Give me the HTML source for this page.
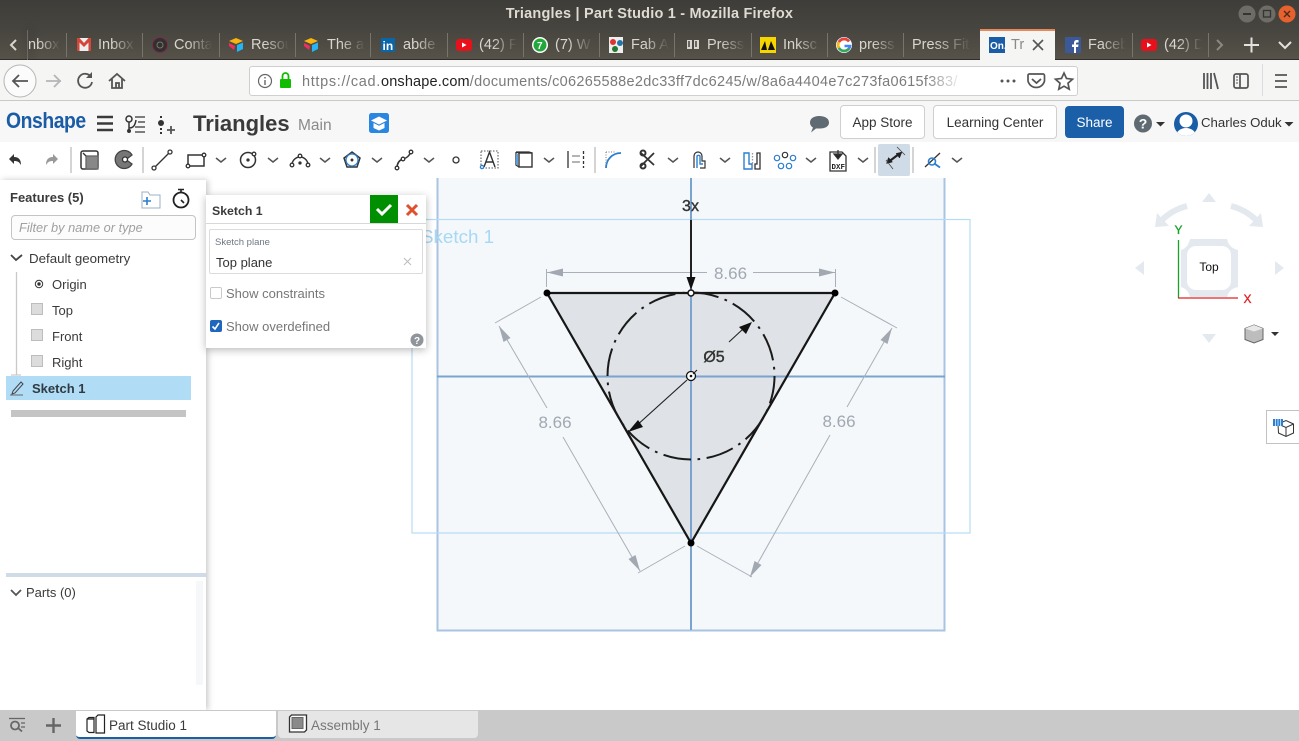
<!DOCTYPE html>
<html><head><meta charset="utf-8"><title>Triangles | Part Studio 1</title>
<style>
html,body{margin:0;padding:0;width:1299px;height:741px;overflow:hidden;background:#fff;font-family:"Liberation Sans",sans-serif}
.a{position:absolute}
#stage{position:absolute;left:0;top:0;width:1299px;height:741px;overflow:hidden}
.t{position:absolute;white-space:nowrap;line-height:16px}
.tab{position:absolute;top:30px;height:30px;width:76px;overflow:hidden}
.tab span{position:absolute;left:32px;top:7px;font-size:14.5px;line-height:16px;color:#d9d6cf;white-space:nowrap;width:38px;overflow:hidden;-webkit-mask-image:linear-gradient(90deg,#000 35%,transparent 100%);mask-image:linear-gradient(90deg,#000 35%,transparent 100%)}
.sep{position:absolute;top:33px;width:1px;height:24px;background:#77746c}
.btn{position:absolute;box-sizing:border-box;background:#fff;border:1px solid #cfcfcf;border-radius:4px;text-align:center;font-size:13.5px;color:#333;line-height:34px}
svg{position:absolute;overflow:visible}
</style></head><body><div id="stage">

<!-- window chrome -->
<div class="a" style="left:0;top:0;width:1299px;height:30px;background:linear-gradient(#3e3d39,#47453f)"></div>
<div class="a" style="left:0;top:30px;width:1299px;height:30px;background:linear-gradient(#47453f,#565249);border-bottom:1px solid #2f2e2b;box-sizing:border-box"></div>
<div class="t" style="left:0;width:1299px;text-align:center;top:6px;font-size:14.5px;letter-spacing:.2px;font-weight:bold;color:#dfdbd2">Triangles | Part Studio 1 - Mozilla Firefox</div>
<svg style="left:0;top:0" width="1299" height="60">
<circle cx="1247" cy="14" r="8.5" fill="#6e6c66"/><rect x="1243" y="13" width="8" height="2" fill="#35342f"/>
<circle cx="1267" cy="14" r="8.5" fill="#6e6c66"/><rect x="1263.5" y="10.5" width="7" height="6.5" fill="none" stroke="#35342f" stroke-width="1.3"/>
<circle cx="1287" cy="14" r="8.5" fill="#e5622f"/><path d="M1284 11l6 6M1290 11l-6 6" stroke="#4a2a18" stroke-width="1.4"/>
<path d="M16 40l-5 5 5 5" fill="none" stroke="#d9d6cf" stroke-width="2"/>
</svg>
<div class="a" style="left:27px;top:30px;width:1px;height:30px;background:#6c6a63;box-shadow:3px 0 8px #222"></div>
<div class="tab" style="left:28px;width:38px"><span style="left:0;width:32px">nbox</span></div>
<div class="sep" style="left:66px"></div><div class="tab" style="left:66px"><span>Inbox</span></div>
<div class="sep" style="left:142px"></div><div class="tab" style="left:142px"><span>Conta</span></div>
<div class="sep" style="left:219px"></div><div class="tab" style="left:219px"><span>Resou</span></div>
<div class="sep" style="left:295px"></div><div class="tab" style="left:295px"><span>The a</span></div>
<div class="sep" style="left:370px"></div><div class="tab" style="left:371px"><span>abde</span></div>
<div class="sep" style="left:447px"></div><div class="tab" style="left:447px"><span>(42) F</span></div>
<div class="sep" style="left:523px"></div><div class="tab" style="left:523px"><span>(7) W</span></div>
<div class="sep" style="left:599px"></div><div class="tab" style="left:599px"><span>Fab A</span></div>
<div class="sep" style="left:674px"></div><div class="tab" style="left:675px"><span>Press</span></div>
<div class="sep" style="left:751px"></div><div class="tab" style="left:751px"><span>Inksc</span></div>
<div class="sep" style="left:827px"></div><div class="tab" style="left:827px"><span>press</span></div>
<div class="sep" style="left:903px"></div><div class="tab" style="left:903px"><span style="left:9px;width:60px">Press Fit</span></div>
<div class="sep" style="left:1132px"></div><div class="tab" style="left:1056px"><span>Faceb</span></div>
<div class="sep" style="left:1208px"></div><div class="tab" style="left:1132px"><span>(42) D</span></div>
<!-- active tab -->
<div class="a" style="left:980px;top:29px;width:75px;height:31px;background:#f5f5f4;border-top:2px solid #e8875a;box-sizing:border-box"></div>
<div class="t" style="left:1011px;top:37px;font-size:14.5px;color:#8a8a88;width:13px;overflow:hidden">Tri</div>
<svg style="left:0;top:0" width="1299" height="60">
<path d="M1033 40l10 10M1043 40l-10 10" stroke="#555" stroke-width="1.6"/>
<rect x="989" y="37" width="16" height="16" fill="#1a5ca6"/><text x="990" y="49" font-family="Liberation Sans" font-weight="bold" font-size="10" fill="#fff">On.</text>
<rect x="77" y="38" width="14" height="13" fill="#eee"/><path d="M77 38h2.500l4.500 5 4.500-5H91v13h-2.500v-8.500L84 47l-4.500-4.500V51H77z" fill="#d44638"/>
<circle cx="160" cy="45" r="7.500" fill="#33302c" stroke="#7a2a55"/><circle cx="160" cy="45" r="3" fill="none" stroke="#777"/>
<path d="M229 41l7-3 7 3-7 3z" fill="#f8b50e"/><path d="M237 45l6-2.500V49l-6 3z" fill="#24b5f2"/><path d="M229 43l6 3-1 4-5-4z" fill="#ef2f60"/>
<path d="M304 41l7-3 7 3-7 3z" fill="#f8b50e"/><path d="M312 45l6-2.500V49l-6 3z" fill="#24b5f2"/><path d="M304 43l6 3-1 4-5-4z" fill="#ef2f60"/>
<rect x="381" y="38" width="14" height="14" fill="#0b66a8"/><text x="382.500" y="50" font-family="Liberation Sans" font-weight="bold" font-size="12" fill="#fff">in</text>
<rect x="456" y="39" width="16" height="12" rx="3" fill="#e8101a"/><path d="M462 42.500l4.500 2.500-4.500 2.500z" fill="#fff"/>
<rect x="1141" y="39" width="16" height="12" rx="3" fill="#e8101a"/><path d="M1147 42.500l4.500 2.500-4.500 2.500z" fill="#fff"/>
<circle cx="540" cy="45" r="8" fill="#fff"/><circle cx="540" cy="45" r="6.500" fill="#22a83a"/><text x="537" y="49" font-size="10" font-weight="bold" font-family="Liberation Sans" fill="#fff">7</text>
<rect x="609" y="37" width="14" height="16" fill="#eee"/><circle cx="613" cy="42" r="3" fill="#d33"/><circle cx="620" cy="43" r="3" fill="#27a"/><circle cx="615" cy="49" r="3" fill="#273"/>
<path d="M687 40h5v9h-5zM694 40h5v9h-5z" fill="#d9d6cf"/><path d="M689 41v6M696 41v6" stroke="#444" stroke-width="1.500"/>
<rect x="760" y="37" width="16" height="16" fill="#f7d600"/><path d="M761 50l4-9 2 9zM768 50l3-9 4 9z" fill="#111"/>
<circle cx="844" cy="45" r="8" fill="#fff"/><path d="M849 41.500A6 6 0 1 0 850 46h-5.500" fill="none" stroke="#4285f4" stroke-width="2.600"/><path d="M849 41.500A6 6 0 0 0 839 42" fill="none" stroke="#ea4335" stroke-width="2.600"/><path d="M839 42a6 6 0 0 0 0 6" fill="none" stroke="#fbbc05" stroke-width="2.600"/><path d="M839 48a6 6 0 0 0 10 0.500" fill="none" stroke="#34a853" stroke-width="2.600"/>
<rect x="1065" y="37" width="16" height="16" fill="#3b5998"/><path d="M1074 53v-6h-2v-2.500h2V43c0-2 1-3 3-3h1.500v2.500H1077c-.7 0-1 .4-1 1v1h2.500l-.4 2.500H1076v6z" fill="#fff"/>
<path d="M1217 40l5 5-5 5" fill="none" stroke="#8b8880" stroke-width="2"/>
<path d="M1244 45h15M1251.500 37.500v15" stroke="#e4e2dc" stroke-width="2"/>
<path d="M1279 42l6 6 6-6" fill="none" stroke="#e4e2dc" stroke-width="2"/>
</svg>

<!-- nav bar -->
<div class="a" style="left:0;top:60px;width:1299px;height:41px;background:#f5f5f4;border-bottom:1px solid #c9c9c9;box-sizing:border-box"></div>
<div class="a" style="left:249px;top:66px;width:829px;height:30px;background:#fff;border:1px solid #cfcfcf;border-radius:3px;box-sizing:border-box"></div>
<div class="t" style="left:302px;top:74px;font-size:14.5px;letter-spacing:.3px;color:#7b7b7b;width:662px;overflow:hidden;-webkit-mask-image:linear-gradient(90deg,#000 94%,transparent);mask-image:linear-gradient(90deg,#000 94%,transparent)"><span style="letter-spacing:.67px">https://cad.</span><span style="color:#222;letter-spacing:.16px">onshape.com</span>/documents/c06265588e2dc33ff7dc6245/w/8a6a4404e7c273fa0615f383/</div>
<svg style="left:0;top:60px" width="1299" height="41">
<circle cx="20" cy="21" r="16" fill="#fbfbfb" stroke="#b5b5b5"/>
<path d="M28 21H13M19 15l-6 6 6 6" fill="none" stroke="#555" stroke-width="1.800"/>
<path d="M61 21H46M54 15l6 6-6 6" fill="none" stroke="#b5b5b5" stroke-width="1.800"/>
<path d="M91 17a7 7 0 1 0 1 5" fill="none" stroke="#555" stroke-width="1.800"/><path d="M92 12v6h-6z" fill="#555"/>
<path d="M109 21l8-7 8 7M112 19v9h10v-9M116 28v-5h3v5" fill="none" stroke="#555" stroke-width="1.800"/>
<circle cx="265" cy="21" r="6.500" fill="none" stroke="#666" stroke-width="1.200"/><path d="M265 20v5M265 17v1.500" stroke="#666" stroke-width="1.400"/>
<rect x="280" y="19" width="11" height="9" rx="1" fill="#12bc00"/><path d="M282.500 19v-3a3 3 0 0 1 6 0v3" fill="none" stroke="#12bc00" stroke-width="1.800"/>
<circle cx="1002" cy="21" r="1.500" fill="#555"/><circle cx="1008" cy="21" r="1.500" fill="#555"/><circle cx="1014" cy="21" r="1.500" fill="#555"/>
<path d="M1029 14h14a1.500 1.500 0 0 1 1.500 1.500V21a8.500 8.500 0 0 1-16.500 0v-5.500a1.500 1.500 0 0 1 1-1.500z" fill="none" stroke="#555" stroke-width="1.700"/><path d="M1032 19l4.500 4 4.500-4" fill="none" stroke="#555" stroke-width="1.800"/>
<path d="M1064 13l2.500 5.500 6 .7-4.500 4 1.200 6-5.200-3-5.200 3 1.200-6-4.500-4 6-.7z" fill="none" stroke="#555" stroke-width="1.700"/>
<path d="M1204 13v16M1207.500 13v16M1211 13v16M1214 13l4 16" stroke="#555" stroke-width="1.800" fill="none"/>
<rect x="1234" y="14" width="14" height="14" rx="2" fill="none" stroke="#555" stroke-width="1.700"/><path d="M1240 14v14" stroke="#555" stroke-width="1.700"/><path d="M1236 17h2M1236 20h2M1236 23h2" stroke="#555"/>
<path d="M1262.500 4v32" stroke="#dcdcdc"/>
<path d="M1275 15h12M1275 21h12M1275 27h12" stroke="#555" stroke-width="1.800"/>
</svg>

<!-- onshape header -->
<div class="a" style="left:0;top:101px;width:1299px;height:41px;background:#f7f7f7"></div>
<div class="t" style="left:6px;top:110px;font-size:22px;line-height:22px;font-weight:bold;color:#1a5ca6;letter-spacing:-.5px;transform:scaleX(.88);transform-origin:0 0">Onshape</div>
<div class="t" style="left:193px;top:112px;font-size:22px;line-height:24px;font-weight:bold;color:#3a3a3a">Triangles</div>
<div class="t" style="left:298px;top:118px;font-size:15.5px;color:#8a8a8a">Main</div>
<svg style="left:0;top:101px" width="1299" height="41">
<path d="M97 16h16M97 22.500h16M97 29h16" stroke="#3a3a3a" stroke-width="2.600"/>
<circle cx="129" cy="18" r="3" fill="none" stroke="#333" stroke-width="1.500"/><path d="M129 21v8M129 27c4 0 6-2 7-8" fill="none" stroke="#333" stroke-width="1.500"/><circle cx="129" cy="30" r="2" fill="#333"/>
<path d="M135 16h10M138 21h7M135 26h10M135 31h10" stroke="#555" stroke-width="1.500"/>
<circle cx="161" cy="22" r="3" fill="#333"/><path d="M161 15v2M161 27v2M161 31v2" stroke="#333" stroke-width="2"/><path d="M167 29h8M171 25v8" stroke="#555" stroke-width="1.800"/>
<rect x="369" y="12" width="20" height="20" rx="2.500" fill="#2a86e0"/><path d="M379 15.500l8 4-8 4-8-4z" fill="#fff"/><path d="M373.500 22v5l5.500 2.500 5.500-2.500v-5l-5.500 2.800z" fill="#fff"/>
<path d="M819 15c6 0 10 2.500 10 6.500s-4 6-9 6c-2 0-3 0-4 0l-5 4 2-5c-2-1-3-3-3-5 0-4 4-6.500 9-6.500z" fill="#5f6a72"/>
<circle cx="1143" cy="22.500" r="9" fill="#5f6a72"/><text x="1143" y="27.500" text-anchor="middle" font-family="Liberation Sans" font-size="14" font-weight="bold" fill="#fff">?</text>
<path d="M1156 21h9l-4.500 4.500z" fill="#333"/>
<clipPath id="av"><circle cx="1186" cy="23" r="12"/></clipPath><circle cx="1186" cy="23" r="12" fill="#1a5ca6"/><g clip-path="url(#av)"><circle cx="1186" cy="20" r="6.500" fill="#fff"/><ellipse cx="1186" cy="35" rx="10" ry="8" fill="#fff"/></g>
<path d="M1284.500 21h9l-4.500 4.500z" fill="#333"/>
</svg>
<div class="btn" style="left:840px;top:105px;width:85px;height:34px">App Store</div>
<div class="btn" style="left:933px;top:105px;width:124px;height:34px">Learning Center</div>
<div class="btn" style="left:1065px;top:106px;width:59px;height:32px;background:#1b5fa8;border:0;color:#fff;line-height:34px">Share</div>
<div class="t" style="left:1201px;top:115px;font-size:13.2px;color:#333">Charles Oduk</div>

<!-- toolbar -->
<div class="a" style="left:0;top:142px;width:1299px;height:36px;background:#fff"></div>
<div class="a" style="left:878px;top:144px;width:32px;height:32px;background:#cfdbe6;border-radius:2px"></div>
<svg style="left:0;top:142px" width="1299" height="36" fill="none" stroke="#333" stroke-width="1.300">
<path d="M13 17l5-5v3c5 0 7 3 7 8-2-3-3-4-7-4v3z" fill="#333" stroke="none" transform="translate(-4 0)"/>
<path d="M13 17l5-5v3c5 0 7 3 7 8-2-3-3-4-7-4v3z" fill="#999" stroke="none" transform="matrix(-1 0 0 1 71 0)"/>
<path d="M71 5v26M143 5v26M595 5v26M875 5v26M913 5v26" stroke="#d4d4d4" stroke-width="2"/>
<rect x="81" y="9" width="17" height="18" rx="2" stroke-width="1.500"/><rect x="86" y="14" width="12" height="13" fill="#888" stroke="#666"/><path d="M83 11l3 3"/>
<path d="M132 13a9 9 0 1 0 0 9l-6-4.500z" fill="#777" stroke="#444"/><circle cx="125" cy="17.500" r="2.500" fill="#fff"/>
<path d="M154 26L170 10"/><circle cx="154" cy="26" r="2" fill="#fff"/><circle cx="170" cy="10" r="2" fill="#fff"/>
<rect x="188" y="13" width="16" height="11" stroke-width="1.500"/><circle cx="188" cy="24" r="1.800" fill="#fff"/><circle cx="204" cy="13" r="1.800" fill="#fff"/>
<circle cx="248" cy="18" r="7.500" stroke-width="1.500"/><circle cx="248" cy="18" r="1" fill="#333"/><circle cx="254" cy="12" r="1.800" fill="#fff"/>
<path d="M292 23a8 8 0 0 1 16 0" stroke-width="1.500"/><circle cx="292" cy="23" r="1.800" fill="#fff"/><circle cx="308" cy="23" r="1.800" fill="#fff"/><circle cx="300" cy="14" r="1.800" fill="#fff"/><circle cx="300" cy="21" r="1" fill="#333"/>
<path d="M352 10l8 6-3 9h-10l-3-9z" stroke-width="1.500"/><circle cx="352" cy="18" r="6" stroke="#2a7fd0"/><circle cx="352" cy="18" r=".8" fill="#2a7fd0"/>
<path d="M397 26c0-6 3-8 6-9 4-1 6-3 8-7" stroke-width="1.500"/><circle cx="397" cy="26" r="1.800" fill="#fff"/><circle cx="403" cy="17" r="1.800" fill="#fff"/><circle cx="411" cy="10" r="1.800" fill="#fff"/>
<circle cx="456" cy="18" r="3"/>
<rect x="481" y="9" width="17" height="17" stroke="#777" stroke-dasharray="1.500 1.500"/><path d="M484 25l5.500-15 5.500 15M486 20h7" stroke-width="1.400"/><circle cx="482" cy="25" r="1.600" stroke="#2a7fd0" fill="#fff"/>
<rect x="519" y="11" width="13" height="14" stroke-width="1.400"/><path d="M516 10l3 1M516 10v13l3 2M516 10h13l3 1"/><path d="M517 12v11" stroke="#5aa0e0" stroke-width="2"/>
<path d="M568 9v17"/><path d="M583.500 9v17" stroke-dasharray="3 2"/><path d="M572 14h8M572 20h8" stroke="#888"/>
<path d="M606 26c0-8 6-15 15-15" stroke="#2a7fd0" stroke-width="1.800"/><path d="M606 10h10M606 10v13" stroke="#999" stroke-dasharray="1 1.500"/>
<path d="M641 11l13 12M641 24l13-13" stroke-width="1.800"/><circle cx="643" cy="11" r="2.500" stroke-width="2"/><circle cx="643" cy="24" r="2.500" stroke-width="2"/>
<path d="M694 26V14a4 4 0 0 1 8 0v5h3v7h-5" stroke-width="1.200"/><path d="M697 26V14a2 2 0 0 1 3 0v8h3" stroke="#2a7fd0" stroke-width="1.400"/>
<path d="M744 11h5v11h3v5h-8z" stroke="#2a7fd0" stroke-width="1.400"/><path d="M755 27h5V11h-3v11h-2z" stroke-width="1.300"/><path d="M752.500 11v16" stroke="#999" stroke-dasharray="1.500 1.500"/>
<g stroke="#2a7fd0" stroke-width="1.200"><circle cx="777" cy="16" r="2.700"/><circle cx="793" cy="16" r="2.700"/><circle cx="781" cy="24" r="2.700"/><circle cx="789" cy="24" r="2.700"/></g><circle cx="785" cy="13" r="2.700" stroke-width="1.200"/>
<path d="M830 10h12l4 4v15h-16z" stroke-width="1.300"/><path d="M838 8v6M834 12h8l-4 5z" fill="#222"/>
<text x="831.500" y="27" font-family="Liberation Mono" font-size="7.500" font-weight="bold" fill="#222" stroke="none">DXF</text>
<path d="M889 19.500l10-7.500" stroke="#222" stroke-width="2.200"/><path d="M886.500 21.500l2-6 4 4.500zM902 10l-6 1.500 3.500 4.500z" fill="#222" stroke="#222" stroke-width=".5"/><path d="M886 18l7 9M897 5l8 8" stroke="#444" stroke-width=".8"/>
<path d="M925 25l15-14" stroke-width="1.300"/><circle cx="932" cy="19.500" r="3.500" stroke="#2a7fd0" stroke-width="1.600"/><path d="M935 22l5 3.500" stroke="#2a7fd0" stroke-width="1.800"/>
<g stroke="#555" stroke-width="1.500"><path d="M216 16l5 4 5-4M268 16l5 4 5-4M320 16l5 4 5-4M372 16l5 4 5-4M424 16l5 4 5-4M544 16l5 4 5-4M668 16l5 4 5-4M720 16l5 4 5-4M806 16l5 4 5-4M858 16l5 4 5-4M952 16l5 4 5-4"/></g>
</svg>

<!-- graphics canvas -->
<svg style="left:0;top:178px" width="1299" height="532" viewBox="0 178 1299 532" font-family="Liberation Sans">
<rect x="437.500" y="178" width="507" height="452" fill="#f4f8fb"/>
<path d="M437.500 178V630.500H944.500V178" fill="none" stroke="#a9c3e0" stroke-width="2"/>
<rect x="412" y="219.500" width="558" height="313.500" fill="none" stroke="#b6dcf3" stroke-width="1.200"/>
<path d="M547 293H835L691 543z" fill="#dfe2e6"/>
<path d="M437 376.500H945M691 178V630" stroke="#7ba3cf" stroke-width="2"/>
<!-- dims -->
<g stroke="#a9b0b8" stroke-width="1" fill="none">
<path d="M546.500 269v18M835.500 269v18M547 272.500H707M753 272.500H835"/>
<path d="M541 297L495 323M841 297L897 328"/>
<path d="M499 326L547 408M563 437L640 571"/>
<path d="M892 328L847 407M830 435L750 577"/>
<path d="M685 546L638 573M697 546L752 577"/>
</g>
<g fill="#a1a8b1">
<path d="M547 272.500l16-4v8zM835 272.500l-16-4v8z"/>
<path d="M499 326L510.500 338L503.500 342z"/>
<path d="M640 571L635.500 555L628.500 559z"/>
<path d="M892 328L887.500 344L880.500 340z"/>
<path d="M750 577L761.500 565L754.500 561z"/>
</g>
<path d="M547 293H835M547 293L691 543L835 293" fill="none" stroke="#161616" stroke-width="2.200"/>
<circle cx="691" cy="376" r="83.500" fill="none" stroke="#1a1a1a" stroke-width="2" stroke-dasharray="28 6.500 2.700 6.500"/>
<path d="M691 220V278" stroke="#222" stroke-width="2"/>
<path d="M691 290l-4.500-13h9z" fill="#111"/>
<circle cx="547" cy="293" r="3.500" fill="#000"/><circle cx="835" cy="293" r="3.500" fill="#000"/><circle cx="691" cy="543" r="3.500" fill="#000"/>
<circle cx="691" cy="293" r="3" fill="#fff" stroke="#111" stroke-width="1.500"/>
<circle cx="691" cy="376" r="4.500" fill="#fff" stroke="#111" stroke-width="1.300"/><circle cx="691" cy="376" r="1.300" fill="#111"/>
<path d="M687 380L635 427M693 374l4-4M729 342l14-13" stroke="#222" stroke-width="1.100"/>
<path d="M628 432L638 420L643 427zM752 322L739 327L746 334z" fill="#111"/>
<text x="690.500" y="211" text-anchor="middle" font-size="16" fill="#333" stroke="#333" stroke-width=".4">3x</text>
<text x="714" y="362" text-anchor="middle" font-size="16" fill="#333" stroke="#333" stroke-width=".4">Ø5</text>
<text x="730.500" y="279" text-anchor="middle" font-size="17" fill="#a1a8b1">8.66</text>
<text x="555" y="428" text-anchor="middle" font-size="17" fill="#a1a8b1">8.66</text>
<text x="839" y="427" text-anchor="middle" font-size="17" fill="#a1a8b1">8.66</text>
<text x="421" y="243" font-size="18.800" fill="#a8d8f3">Sketch 1</text>
<!-- nav cube -->
<g fill="#e3e9ef">
<path d="M1209 193l7 9h-14zM1209 343l7-9h-14zM1135 268l9-7v14zM1284 268l-9-7v14z"/>
<path d="M1155 227L1157 213L1169 226z"/>
<path d="M1263 227L1261 213L1249 226z"/>
<path d="M1190 239H1227Q1229 248 1238 250V287Q1229 289 1227 297H1190Q1188 289 1181 287V250Q1188 248 1190 239z"/>
</g>
<path d="M1187 206Q1172 210 1162 220M1231 206Q1246 210 1256 220" fill="none" stroke="#e3e9ef" stroke-width="6"/>
<rect x="1187" y="246" width="44" height="44" rx="9" fill="#fff"/>
<text x="1209" y="271" text-anchor="middle" font-size="12" fill="#111">Top</text>
<path d="M1178.500 298V240" stroke="#16a326" stroke-width="1.300"/><path d="M1178 298H1238" stroke="#e02020" stroke-width="1.300"/>
<text x="1178.500" y="234" text-anchor="middle" font-size="12" fill="#16a326" stroke="#16a326" stroke-width=".3">Y</text>
<text x="1247.500" y="303" text-anchor="middle" font-size="12" fill="#e02020" stroke="#e02020" stroke-width=".3">X</text>
<path d="M1254 325l9 3.500v11l-9 3.500-9-3.500v-11z" fill="#bdbdbd" stroke="#666"/><path d="M1245 328.500l9 3 9-3-9-3.500z" fill="#e8e8e8"/>
<path d="M1271 332h8l-4 4z" fill="#333"/>
<rect x="1266.500" y="410.500" width="33" height="33" fill="#fff" stroke="#c2c2c2"/>
<path d="M1278 424l8-3.500 7.500 3.500v9l-7.500 3.500-7.500-3.500z M1278 424l8 3.500 7.500-3.500M1286 427.500v9" fill="none" stroke="#333"/>
<rect x="1273" y="419" width="10" height="7" fill="#2a7fd0"/><path d="M1275.500 419v7M1278 419v7M1280.500 419v7" stroke="#fff" stroke-width=".7"/>
</svg>

<!-- left panel -->
<div class="a" style="left:0;top:180px;width:206px;height:530px;background:#fff;box-shadow:2px 0 6px rgba(0,0,0,.22)"></div>
<div class="t" style="left:10px;top:190px;font-size:13px;font-weight:bold;color:#3a3a3a">Features (5)</div>
<div class="a" style="left:11px;top:215px;width:185px;height:25px;box-sizing:border-box;border:1px solid #c4c4c4;border-radius:4px;background:#fcfcfc"></div>
<div class="t" style="left:19px;top:220px;font-size:12.800px;font-style:italic;color:#a0a0a0">Filter by name or type</div>
<div class="t" style="left:29px;top:251px;font-size:13.300px;color:#3a3a3a">Default geometry</div>
<div class="t" style="left:52px;top:277px;font-size:13px;color:#3a3a3a">Origin</div>
<div class="t" style="left:52px;top:303px;font-size:13px;color:#3a3a3a">Top</div>
<div class="t" style="left:52px;top:329px;font-size:13px;color:#3a3a3a">Front</div>
<div class="t" style="left:52px;top:355px;font-size:13px;color:#3a3a3a">Right</div>
<div class="a" style="left:6px;top:376px;width:185px;height:24px;background:#b0dcf5"></div>
<div class="t" style="left:32px;top:381px;font-size:13px;font-weight:bold;color:#2f3a42">Sketch 1</div>
<div class="a" style="left:11px;top:410px;width:175px;height:7px;background:#c4c4c4"></div>
<div class="a" style="left:6px;top:573px;width:200px;height:4px;background:#cfdbe6"></div>
<div class="a" style="left:196px;top:581px;width:7px;height:104px;background:#f6f7f9"></div>
<div class="t" style="left:26px;top:585px;font-size:13px;color:#3a3a3a">Parts (0)</div>
<svg style="left:0;top:180px" width="206" height="420" fill="none">
<path d="M142 12h6l2 3h10v13h-18z" stroke="#9bb0c4"/><path d="M143 21h8M147 17v8" stroke="#2a7fd0" stroke-width="1.600"/>
<circle cx="181" cy="20" r="7.500" stroke="#222" stroke-width="1.800"/><path d="M178 9.500h6M181 10v3M181 20l3 3" stroke="#222" stroke-width="1.600"/>
<path d="M11 75l5 5 6-5" stroke="#444" stroke-width="1.800"/>
<path d="M16.500 92v103M11 195h10" stroke="#c9c9c9" stroke-width="1.300"/>
<circle cx="39" cy="104" r="3.700" stroke="#333"/><circle cx="39" cy="104" r="1.700" fill="#333"/>
<g fill="#dcdcdc" stroke="#bdbdbd"><path d="M31.500 123.500h11v11h-11zM31.500 149.500h11v11h-11zM31.500 175.500h11v11h-11z"/></g>
<path d="M13 211l8-9 2 2-8 9-3 1z" stroke="#444"/><path d="M10 215h13" stroke="#666"/>
<path d="M11 410l5 5 5-5" stroke="#555" stroke-width="1.800"/>
</svg>

<!-- sketch dialog -->
<div class="a" style="left:206px;top:195px;width:220px;height:153px;background:#fff;box-shadow:0 2px 8px rgba(0,0,0,.28)"></div>
<div class="t" style="left:212px;top:203px;font-size:12.300px;font-weight:bold;color:#3a3a3a">Sketch 1</div>
<div class="a" style="left:370px;top:195px;width:28px;height:28px;background:#008f00"></div>
<div class="a" style="left:206px;top:223px;width:220px;height:1px;background:#d8d8d8"></div>
<div class="a" style="left:209px;top:229px;width:214px;height:45px;box-sizing:border-box;border:1px solid #dcdcdc;border-radius:2px"></div>
<div class="t" style="left:215px;top:235px;font-size:9.500px;color:#6d7883">Sketch plane</div>
<div class="t" style="left:216px;top:255px;font-size:13px;color:#333">Top plane</div>
<div class="t" style="left:226px;top:286px;font-size:13px;color:#777">Show constraints</div>
<div class="t" style="left:226px;top:319px;font-size:13px;color:#777">Show overdefined</div>
<div class="a" style="left:210px;top:287px;width:12px;height:12px;box-sizing:border-box;border:1px solid #c9c9c9;border-radius:2px;background:#fff"></div>
<div class="a" style="left:210px;top:320px;width:12px;height:12px;border-radius:2px;background:#1f66bd"></div>
<svg style="left:206px;top:195px" width="220" height="153" fill="none">
<path d="M171 14l5 5 9-9" stroke="#fff" stroke-width="3"/>
<path d="M201 10l10 10M211 10l-10 10" stroke="#e0502a" stroke-width="3"/>
<path d="M198 63l7 7M205 63l-7 7" stroke="#bbb"/>
<path d="M6.500 131.500l2.500 2.500 4-6" stroke="#fff" stroke-width="1.600"/>
<circle cx="211" cy="145" r="6.500" fill="#8f959b"/><text x="211" y="149" text-anchor="middle" font-family="Liberation Sans" font-size="10" font-weight="bold" fill="#fff">?</text>
</svg>

<!-- bottom bar -->
<div class="a" style="left:0;top:710px;width:1299px;height:31px;background:#c9c9c9"></div>
<div class="a" style="left:76px;top:711px;width:200px;height:28px;background:#fff;border-bottom:2px solid #1b5fa8;box-sizing:border-box;border-radius:0 0 4px 4px"></div>
<div class="a" style="left:278px;top:711px;width:200px;height:27px;background:#e6e6e6;border-radius:0 0 4px 4px"></div>
<div class="t" style="left:109px;top:718px;font-size:13.500px;color:#3a3a3a">Part Studio 1</div>
<div class="t" style="left:311px;top:718px;font-size:13.500px;color:#777">Assembly 1</div>
<svg style="left:0;top:710px" width="500" height="31" fill="none">
<path d="M9 8.500h16" stroke="#666" stroke-width="1.300"/><circle cx="15" cy="15.500" r="4" stroke="#666" stroke-width="1.800"/><path d="M18 18l4 3.500" stroke="#666" stroke-width="1.800"/><path d="M21 13h4M21 17h4" stroke="#666" stroke-width="1.300"/>
<path d="M46 15.500h15M53.500 8v15" stroke="#666" stroke-width="2.400"/>
<path d="M87 9l2-1.500h5V22.500h-5l-2-1.500zM87 9h7" stroke="#222" stroke-width="1.200"/><path d="M96 7l2-2h6.500v18H96z" stroke="#222" stroke-width="1.200"/>
<path d="M289.500 7l2-2h15v15l-2 2h-15z" fill="#fff" stroke="#333" stroke-width="1.300"/><rect x="292" y="7.500" width="11" height="11" fill="#8a8a8a" stroke="#666"/>
</svg>
</div></body></html>
